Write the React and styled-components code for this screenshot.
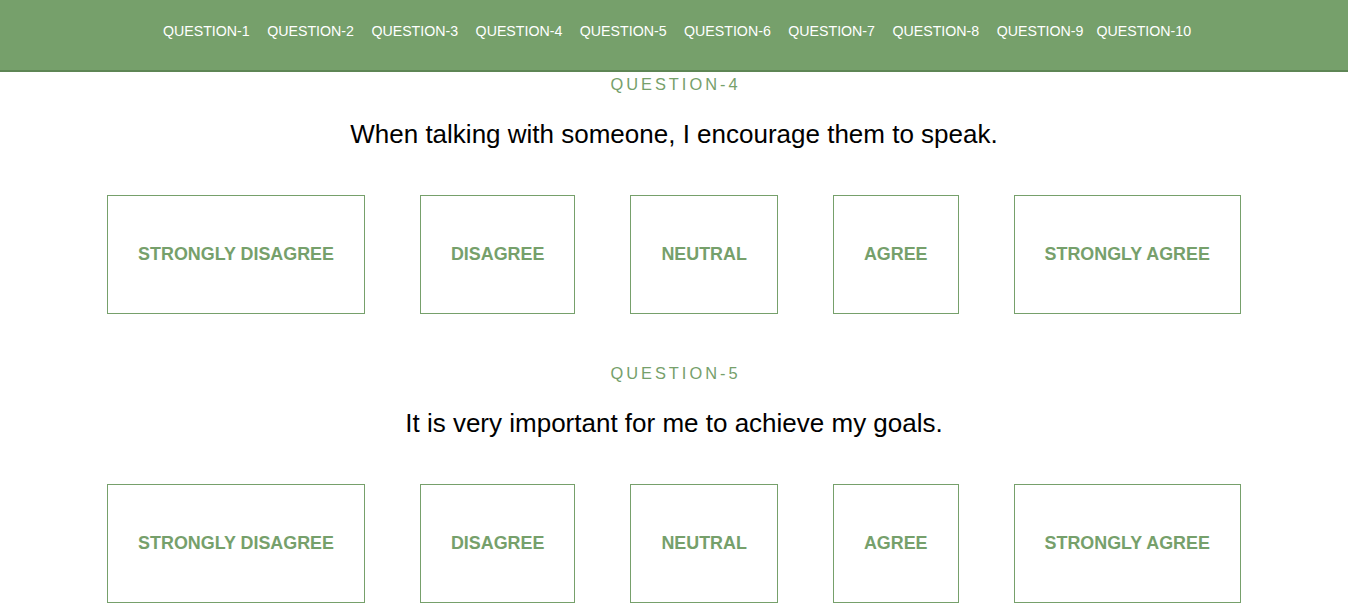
import React from 'react';
import styled, { createGlobalStyle } from 'styled-components';

const GlobalStyle = createGlobalStyle`
  body {
    margin: 0;
    font-family: "Liberation Sans", Arial, sans-serif;
    background: #fff;
  }
`;

const green = '#76a06b';

const Header = styled.header`
  height: 70px;
  background: ${green};
  border-bottom: 2px solid #5e8655;
  display: flex;
  align-items: center;
  justify-content: center;
  padding-left: 6px;
`;

const NavLink = styled.a`
  color: #fff;
  font-size: 14.2px;
  text-decoration: none;
  margin-right: ${(p) => (p.$tight ? '13px' : p.$last ? '0' : '17.5px')};
  line-height: 18px;
  margin-top: -8px;
  cursor: pointer;
`;

const Main = styled.main`
  display: flex;
  flex-direction: column;
  align-items: center;
  gap: 50px;
  padding-top: 3px;
`;

const Section = styled.section`
  display: flex;
  flex-direction: column;
  align-items: center;
`;

const Label = styled.div`
  color: ${green};
  font-size: 16.4px;
  letter-spacing: 3px;
  line-height: 18px;
  margin-right: -3px;
`;

const Text = styled.p`
  margin: 26px 0 0;
  font-size: 26px;
  line-height: 30px;
  color: #000;
`;

const Options = styled.div`
  display: flex;
  gap: 55px;
  margin-top: 46px;
`;

const Option = styled.button`
  font-family: inherit;
  background: #fff;
  border: 1px solid ${green};
  color: ${green};
  font-weight: bold;
  font-size: 17.9px;
  line-height: 21px;
  padding: 48px 30px;
  cursor: pointer;
`;

const answers = ['STRONGLY DISAGREE', 'DISAGREE', 'NEUTRAL', 'AGREE', 'STRONGLY AGREE'];

const questions = [
  { id: 4, text: 'When talking with someone, I encourage them to speak.' },
  { id: 5, text: 'It is very important for me to achieve my goals.' },
];

const App = () => (
  <>
    <GlobalStyle />
    <Header>
      {Array.from({ length: 10 }, (_, i) => (
        <NavLink key={i} $tight={i === 8} $last={i === 9}>
          QUESTION-{i + 1}
        </NavLink>
      ))}
    </Header>
    <Main>
      {questions.map((q) => (
        <Section key={q.id}>
          <Label>QUESTION-{q.id}</Label>
          <Text>{q.text}</Text>
          <Options>
            {answers.map((a) => (
              <Option key={a}>{a}</Option>
            ))}
          </Options>
        </Section>
      ))}
    </Main>
  </>
);

export default App;
